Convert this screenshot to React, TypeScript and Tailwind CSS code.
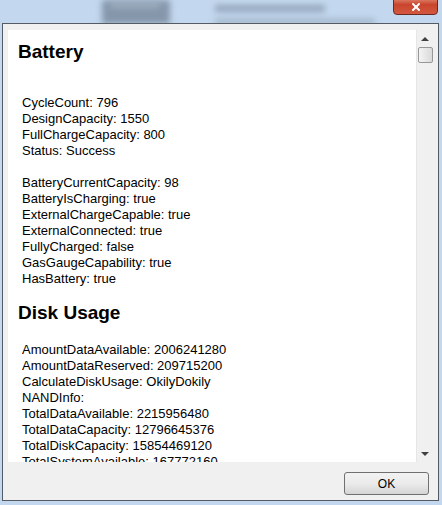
import { X } from "lucide-react";

const battery1 = [
  "CycleCount: 796",
  "DesignCapacity: 1550",
  "FullChargeCapacity: 800",
  "Status: Success",
];

const battery2 = [
  "BatteryCurrentCapacity: 98",
  "BatteryIsCharging: true",
  "ExternalChargeCapable: true",
  "ExternalConnected: true",
  "FullyCharged: false",
  "GasGaugeCapability: true",
  "HasBattery: true",
];

const disk = [
  "AmountDataAvailable: 2006241280",
  "AmountDataReserved: 209715200",
  "CalculateDiskUsage: OkilyDokily",
  "NANDInfo:",
  "TotalDataAvailable: 2215956480",
  "TotalDataCapacity: 12796645376",
  "TotalDiskCapacity: 15854469120",
  "TotalSystemAvailable: 167772160",
  "TotalSystemCapacity: 3057823744",
];

const Lines = ({ items }: { items: string[] }) => (
  <div className="pl-[4px]">
    {items.map((t) => (
      <div key={t} className="h-4 leading-4 whitespace-nowrap">
        {t}
      </div>
    ))}
  </div>
);

export default function App() {
  return (
    <div
      className="relative w-[442px] h-[505px] overflow-hidden bg-[#c3d8ee] text-black"
      style={{ fontFamily: '"Liberation Sans", Arial, sans-serif' }}
    >
      {/* blurred aero glass behind the window */}
      <div className="absolute left-[102px] top-0 w-[68px] h-[24px] bg-[#8596ab] blur-[3px]" />
      <div className="absolute left-[110px] top-[2px] w-[50px] h-[6px] bg-[#a9b9c9] blur-[3px] opacity-70" />
      <div className="absolute left-[215px] top-[5px] w-[110px] h-[7px] bg-[#7f8ea3] blur-[3px] opacity-70" />
      <div className="absolute left-[215px] top-[19px] w-[160px] h-[5px] bg-[#8594a9] blur-[3px] opacity-60" />

      {/* close button */}
      <div className="absolute left-[393px] top-[-6px] w-[45px] h-[21px] rounded-[4px] border border-[#6b2a20] bg-gradient-to-b from-[#e8a493] via-[#c9452d] to-[#d2583f] flex items-center justify-center pt-[5px]">
        <X className="w-[12px] h-[12px] text-white" strokeWidth={4} />
      </div>

      {/* window */}
      <div className="absolute left-[2px] top-[23px] w-[437px] h-[478px] border border-[#555b63] bg-[#f0f0f0] flex flex-col">
        <div className="mt-[6px] ml-[5px] mr-[5px] h-[432px] flex">
          <div className="flex-1 bg-white overflow-hidden text-[13px]">
            <div className="pl-[10px] pt-[11px]">
              <div className="text-[19px] font-bold leading-[22px] h-[22px]">Battery</div>
              <div className="h-[32px]" />
              <Lines items={battery1} />
              <div className="h-4" />
              <Lines items={battery2} />
              <div className="h-[15px]" />
              <div className="text-[19px] font-bold leading-[22px] h-[22px]">Disk Usage</div>
              <div className="h-[18px]" />
              <Lines items={disk} />
            </div>
          </div>
          {/* scrollbar */}
          <div className="w-[17px] bg-[#f0f0f0] border-l border-[#e6e6e6] flex flex-col items-center">
            <div className="h-[17px] flex items-center justify-center">
              <div className="w-0 h-0 border-l-[4px] border-r-[4px] border-b-[4px] border-l-transparent border-r-transparent border-b-[#404040]" />
            </div>
            <div className="w-[15px] h-[16px] rounded-[2px] border border-[#979797] bg-gradient-to-r from-[#f4f4f4] to-[#dadada]" />
            <div className="flex-1" />
            <div className="h-[17px] flex items-center justify-center">
              <div className="w-0 h-0 border-l-[4px] border-r-[4px] border-t-[4px] border-l-transparent border-r-transparent border-t-[#404040]" />
            </div>
          </div>
        </div>
        <div className="flex-1 flex justify-end items-start pt-[10px] pr-[9px]">
          <button className="w-[85px] h-[23px] rounded-[3px] border border-[#707070] bg-gradient-to-b from-[#f2f2f2] via-[#ebebeb] to-[#d5d5d5] text-[12px] leading-none">
            OK
          </button>
        </div>
      </div>
    </div>
  );
}
